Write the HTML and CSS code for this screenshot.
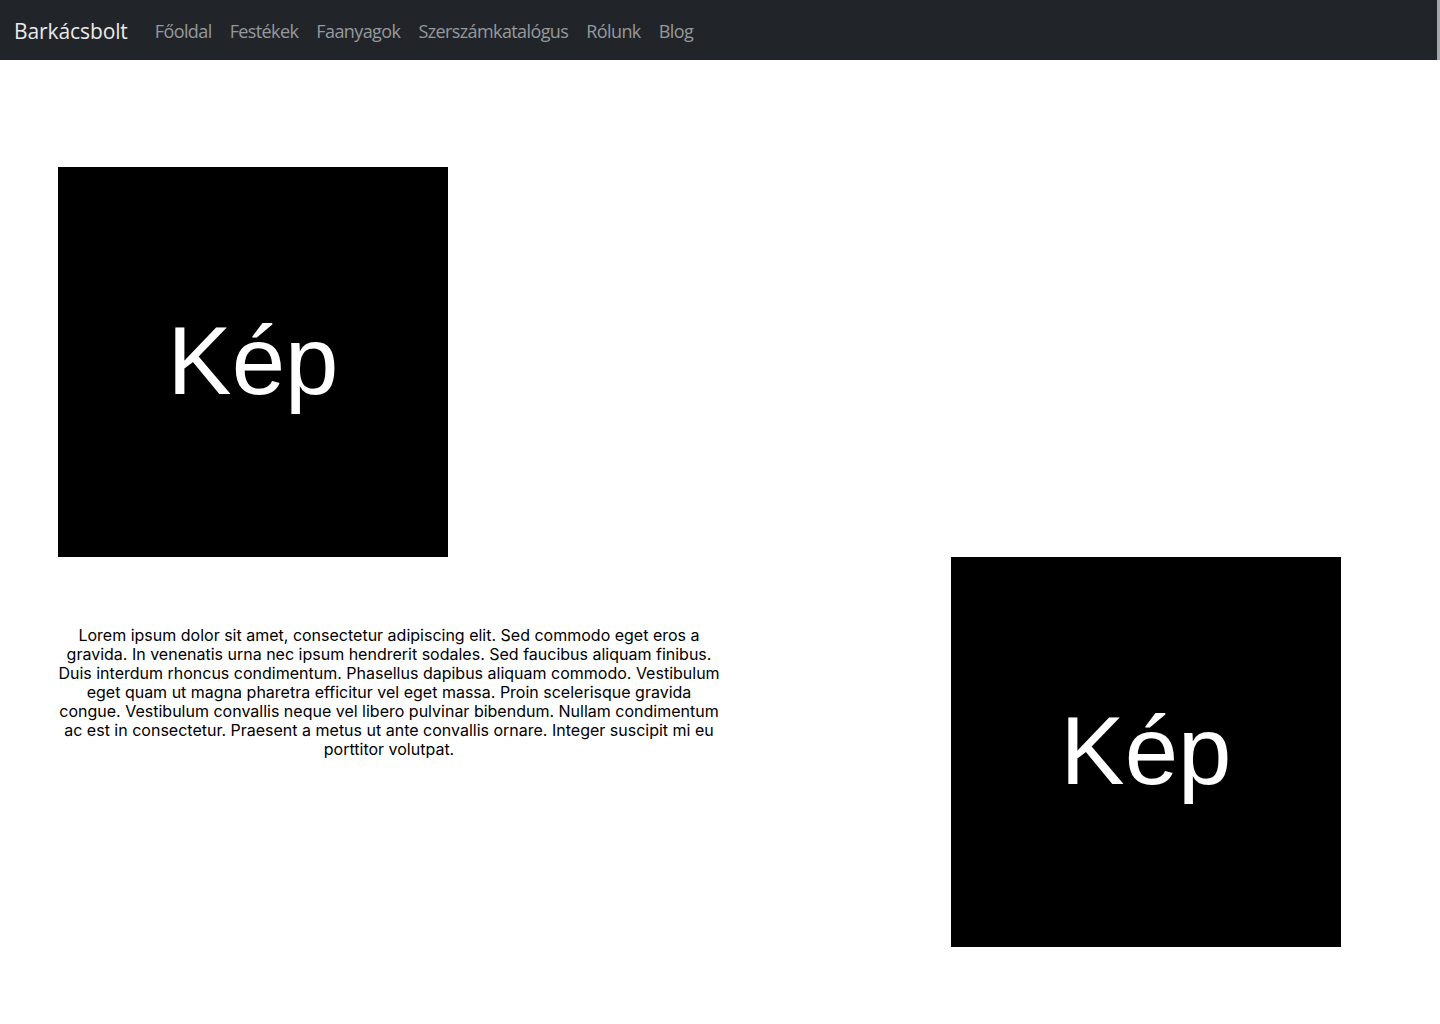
FILE: index.html
```html
<!DOCTYPE html>
<html lang="hu">
<head>
<meta charset="utf-8">
<title>Barkácsbolt</title>
<link rel="stylesheet" href="styles.css">
</head>
<body>
<nav class="navbar">
  <a class="brand" href="#">Barkácsbolt</a>
  <ul class="nav-links">
    <li><a href="#">Főoldal</a></li>
    <li><a href="#">Festékek</a></li>
    <li><a href="#">Faanyagok</a></li>
    <li><a href="#">Szerszámkatalógus</a></li>
    <li><a href="#">Rólunk</a></li>
    <li><a href="#">Blog</a></li>
  </ul>
</nav>
<main class="content">
  <div class="row">
    <div class="pic">Kép</div>
  </div>
  <div class="row row-split">
    <p class="text">Lorem ipsum dolor sit amet, consectetur adipiscing elit. Sed commodo eget eros a gravida. In venenatis urna nec ipsum hendrerit sodales. Sed faucibus aliquam finibus. Duis interdum rhoncus condimentum. Phasellus dapibus aliquam commodo. Vestibulum eget quam ut magna pharetra efficitur vel eget massa. Proin scelerisque gravida congue. Vestibulum convallis neque vel libero pulvinar bibendum. Nullam condimentum ac est in consectetur. Praesent a metus ut ante convallis ornare. Integer suscipit mi eu porttitor volutpat.</p>
    <div class="pic">Kép</div>
  </div>
</main>
</body>
</html>
```

FILE: styles.css
```css
* { box-sizing: border-box; }
html, body { margin: 0; padding: 0; background: #fff; }
body { font-family: Inter, "Noto Sans", sans-serif; color: #000; }

.navbar {
  height: 60px;
  width: 1440px;
  background: #212529;
  border-right: 3px solid #a3a6aa;
  display: flex;
  align-items: center;
  padding: 2px 14px 0;
  gap: 27px;
  font-family: "Open Sans", "Noto Sans", sans-serif;
}
.brand {
  color: #e9eaea;
  text-decoration: none;
  font-size: 21px;
  letter-spacing: -0.1px;
}
.nav-links {
  list-style: none;
  margin: 0;
  padding: 0;
  display: flex;
  gap: 18px;
}
.nav-links a {
  color: #96999c;
  text-decoration: none;
  font-size: 18px;
  letter-spacing: -0.6px;
}

.content {
  padding: 107px 99px 0 58px;
}
.row { display: flex; }
.row-split {
  justify-content: space-between;
  align-items: flex-start;
}
.pic {
  width: 390px;
  height: 390px;
  background: #000;
  color: #fff;
  display: flex;
  align-items: center;
  justify-content: center;
  font-family: "Liberation Sans", Arial, sans-serif;
  font-size: 96px;
  padding-bottom: 2px;
}
.text {
  width: 662px;
  margin: 69px 0 0;
  text-align: center;
  font-size: 16px;
  line-height: 19px;
}
```
